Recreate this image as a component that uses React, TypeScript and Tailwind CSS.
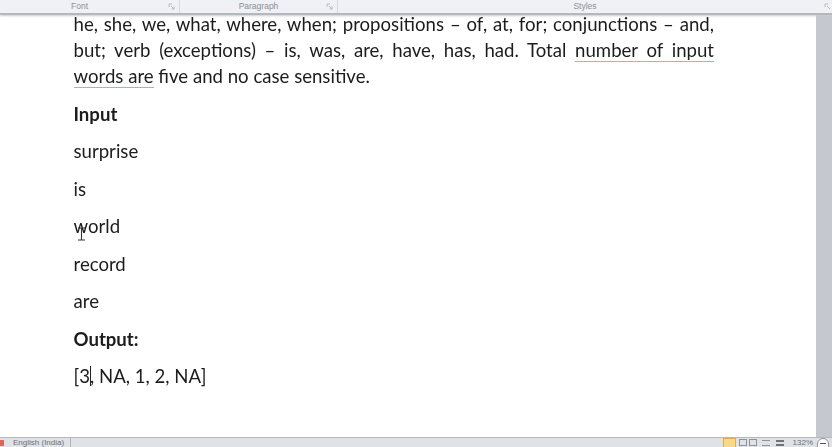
const bodyFont = { fontFamily: 'Lato, "Open Sans", sans-serif' };

function Squiggle({ children }: { children: React.ReactNode }) {
  return <span className="border-b border-[#9dbf9d] pb-[0px]">{children}</span>;
}

function GroupLabel({ label, className }: { label: string; className: string }) {
  return (
    <div className={`relative flex h-full items-center justify-center border-r border-[#d5d8dc] ${className}`}>
      <span className="text-[8.5px] text-[#8b8f94]">{label}</span>
      <svg className="absolute right-[4px] top-[3px]" width="7" height="7" viewBox="0 0 7 7">
        <path d="M1 1h3M1 1v3M3 3l3 3M6 3.5V6H3.5" fill="none" stroke="#a9adb2" strokeWidth="0.8" />
      </svg>
    </div>
  );
}

function Para({ children, bold }: { children: React.ReactNode; bold?: boolean }) {
  return <p className={`h-[37.5px] leading-[26px] ${bold ? 'font-bold' : ''}`}>{children}</p>;
}

export default function App() {
  return (
    <div className="flex h-[447px] w-[832px] flex-col overflow-hidden bg-white" style={{ fontFamily: '"Liberation Sans", sans-serif' }}>
      {/* ribbon group labels */}
      <div className="relative z-10 flex h-[15px] shrink-0 border-b-2 border-[#b4b8bd] bg-[#eff1f4] shadow-[0_1px_2px_#c9ccd0]">
        <GroupLabel label="Font" className="w-[180px] pr-[20px] pl-[0px]" />
        <GroupLabel label="Paragraph" className="w-[158px]" />
        <div className="relative flex h-full flex-1 items-center justify-center">
          <span className="text-[8.5px] text-[#8b8f94]">Styles</span>
          <svg className="absolute right-[1px] top-[3px]" width="7" height="7" viewBox="0 0 7 7">
            <path d="M1 1h3M1 1v3M3 3l3 3" fill="none" stroke="#a9adb2" strokeWidth="0.8" />
          </svg>
        </div>
      </div>

      <div className="flex min-h-0 flex-1">
        {/* page */}
        <div className="relative flex-1 bg-white pl-[73.5px] pr-[102px] text-[18.6px] text-[#1c1c1c] blur-[0.3px]" style={bodyFont}>
          <div className="-mt-[4px]">
            <p className="h-[26px] whitespace-nowrap leading-[26px] [text-align-last:justify]">
              he, she, we, what, where, when; propositions – of, at, for; conjunctions – and,
            </p>
            <p className="h-[26px] whitespace-nowrap leading-[26px] [text-align-last:justify]">
              but; verb (exceptions) – is, was, are, have, has, had. Total <Squiggle>number of input</Squiggle>
            </p>
            <p className="h-[37.5px] leading-[26px]">
              <Squiggle>words are</Squiggle> five and no case sensitive.
            </p>
            <Para bold>Input</Para>
            <Para>surprise</Para>
            <Para>is</Para>
            <Para>world</Para>
            <Para>record</Para>
            <Para>are</Para>
            <Para bold>Output:</Para>
            <Para>
              [3<span className="relative"><span className="absolute left-0 top-[1px] h-[20px] w-px bg-[#222]" /></span>, NA, 1, 2, NA]
            </Para>
          </div>
          {/* mouse I-beam */}
          <svg className="absolute left-[77px] top-[212px]" width="9" height="14" viewBox="0 0 9 14">
            <path d="M1 1h7M4.5 1v12M1 13h7" fill="none" stroke="#333" strokeWidth="1.1" />
          </svg>
        </div>
        {/* scrollbar gutter */}
        <div className="w-[16px] shrink-0 bg-[#c5c9cf]" />
      </div>

      {/* status bar */}
      <div className="relative z-10 flex h-[10px] shrink-0 items-start border-t border-[#b5b8bc] bg-[#dfe2e6] text-[8px] leading-[10px] text-[#6c7076]">
        <span className="ml-[0px] mt-[2px] h-[6px] w-[4px] bg-[#d9685c]" />
        <span className="ml-[9px] border-r border-[#b0b3b8] pr-[6px]">English (India)</span>
        <div className="ml-auto flex items-start">
          <span className="h-[10px] w-[13px] border border-[#e0b050] bg-[#f8d98a]" />
          <span className="ml-[3px] mt-[1px] h-[7px] w-[8px] border border-[#8f9399]" />
          <span className="ml-[2px] mt-[1px] h-[7px] w-[8px] border border-[#8f9399]" />
          <span className="ml-[5px] mt-[2px] h-[6px] w-[8px] border-y border-[#8f9399]" />
          <span className="ml-[6px] mt-[2px] h-[6px] w-[8px] border-y-2 border-[#70747a]" />
          <span className="ml-[9px] mr-[4px]">132%</span>
          <span className="mr-[3px] mt-[0px] flex h-[10px] w-[12px] items-center justify-center rounded-t-full border border-[#8f9399] bg-white">
            <span className="h-px w-[6px] bg-[#555]" />
          </span>
        </div>
      </div>
    </div>
  );
}
